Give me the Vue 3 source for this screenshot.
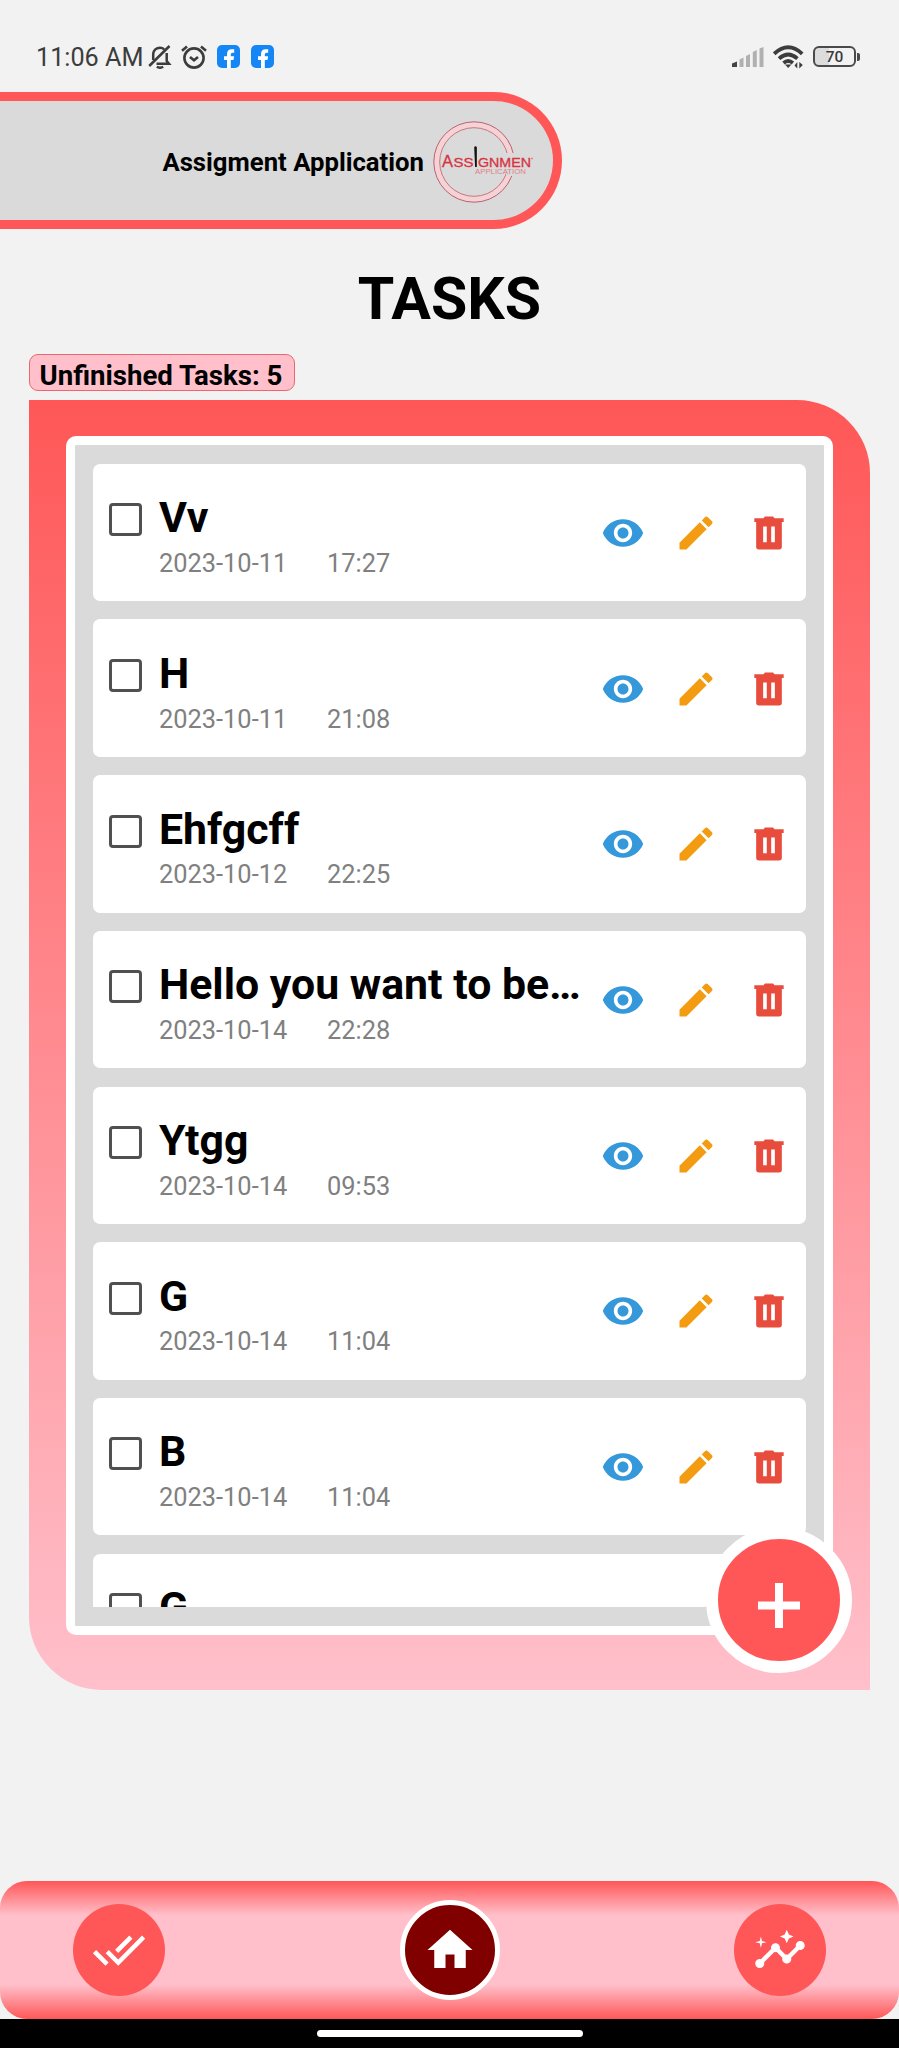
<script setup>
const tasks = [
  { title: 'Vv', date: '2023-10-11', time: '17:27' },
  { title: 'H', date: '2023-10-11', time: '21:08' },
  { title: 'Ehfgcff', date: '2023-10-12', time: '22:25' },
  { title: 'Hello you want to be…', date: '2023-10-14', time: '22:28' },
  { title: 'Ytgg', date: '2023-10-14', time: '09:53' },
  { title: 'G', date: '2023-10-14', time: '11:04' },
  { title: 'B', date: '2023-10-14', time: '11:04' },
  { title: 'G' },
]
</script>

<template>
  <div class="screen">
    <div class="status">
      <span class="clock">11:06 AM</span>
      <svg class="bell" viewBox="0 0 24 24" fill="none" stroke="#3c3c3c" stroke-width="2.500">
        <path d="M5.200 15.500V10a6.800 6.800 0 0 1 11-5.300M18.700 8.500v8l2.300 2.800H8.500" />
        <path d="M1.200 21.500 21.500 1.500" />
        <path d="M8.800 22.300q3.200 1.900 6.400 0" />
      </svg>
      <svg class="alarm" viewBox="0 0 26 24" fill="none" stroke="#3c3c3c" stroke-width="2.600">
        <circle cx="13" cy="13" r="9.600" />
        <path d="M1 5.800 6 1.400M25 5.800 20 1.400M9 12l4 3.300 4-3.300" />
      </svg>
      <svg v-for="n in 2" :key="n" class="fb" viewBox="0 0 23 23">
        <rect width="23" height="23" rx="5" fill="#1486f5" />
        <path d="M10 23v-8H7v-3.800h3V9q0-4.700 4.700-4.700h2.500v3.500h-1.700q-1.700 0-1.700 1.700v1.700h3.300l-.6 3.800h-2.700v8z" fill="#fff" />
      </svg>
      <span class="spacer"></span>
      <svg class="signal" viewBox="0 0 32 20">
        <path d="M0 20v-3.500l5-2V20z" fill="#444" />
        <path d="M7.500 20v-7.500l4-2V20zM14 20V9l4-2v13zM20.800 20V5l4-2v17zM27.500 20V1.500l4-1.500v20z" fill="#b0b0b0" />
      </svg>
      <svg class="wifi" viewBox="0 0 31 24" fill="none" stroke="#3c3c3c" stroke-width="3.800">
        <path d="M1.200 8.800q14-13 28 0M6 13.600q9.200-8.200 18.400 0M10.500 18q4.700-4 9.400 0" />
        <path d="M12 19.500h6.400L15.200 23z" fill="#3c3c3c" stroke="none" />
        <path d="M24.300 17v6.500l-2.800-3zM26.300 23.500V17l3.500 3z" fill="#3c3c3c" stroke="none" />
      </svg>
      <span class="battery"><span class="cell">70</span><span class="nub"></span></span>
    </div>

    <header class="brand">
      <span class="name">Assigment Application</span>
      <svg class="logo" viewBox="0 0 104 84">
        <circle cx="41" cy="42" r="37.300" fill="none" stroke="#f6d2d5" stroke-width="5.500" />
        <circle cx="41" cy="42" r="40.200" fill="none" stroke="#b0566a" stroke-width=".9" />
        <circle cx="41" cy="42" r="34.300" fill="none" stroke="#c36b78" stroke-width=".9" />
        <rect x="73" y="33" width="12" height="23" fill="#dadada" />
        <g fill="#d8323f" stroke="#d8323f" stroke-width=".3" font-family="'Liberation Sans', sans-serif">
          <text x="9" y="46.500" font-size="16" textLength="11" lengthAdjust="spacingAndGlyphs">A</text>
          <text x="20.500" y="46.500" font-size="12.500" textLength="20" lengthAdjust="spacingAndGlyphs">SS</text>
          <text x="45" y="46.500" font-size="12.500" textLength="53" lengthAdjust="spacingAndGlyphs">GNMEN</text>
          <text x="98.500" y="42" font-size="6">'</text>
          <text x="42" y="53.500" font-size="7" fill="#e07f87" stroke="none" textLength="51" lengthAdjust="spacingAndGlyphs">APPLICATION</text>
        </g>
        <path d="M41.200 27q1.300-1.500 2.600 0v20h-1.700z" fill="#111" />
      </svg>
    </header>

    <h1 class="title">TASKS</h1>
    <div class="count">Unfinished Tasks: 5</div>

    <main class="panel">
      <div class="frame">
        <div class="list">
          <article v-for="(task, i) in tasks" :key="i" class="card">
            <span class="check"></span>
            <div class="info">
              <div class="task">{{ task.title }}</div>
              <div v-if="task.date" class="meta"><span class="date">{{ task.date }}</span><span>{{ task.time }}</span></div>
            </div>
            <div class="actions">
              <svg viewBox="0 0 24 24" fill="#3498db"><path d="M12 4.500C7 4.500 2.730 7.610 1 12c1.730 4.390 6 7.500 11 7.500s9.270-3.110 11-7.500c-1.730-4.390-6-7.500-11-7.500zM12 17c-2.760 0-5-2.240-5-5s2.240-5 5-5 5 2.240 5 5-2.240 5-5 5zm0-8c-1.660 0-3 1.340-3 3s1.340 3 3 3 3-1.340 3-3-1.340-3-3-3z" /></svg>
              <svg viewBox="0 0 24 24" fill="#f39c12"><path d="M3 17.250V21h3.750L17.810 9.940l-3.750-3.750L3 17.250zM20.710 7.040c.39-.39.39-1.020 0-1.410l-2.340-2.340c-.39-.39-1.020-.39-1.410 0l-1.830 1.830 3.750 3.750 1.830-1.830z" /></svg>
              <svg viewBox="0 0 24 24" fill="#e74c3c"><path fill-rule="evenodd" d="M4 4h5l.8-1h4.400l.8 1h5v2h-1v13.500q0 1.500-1.500 1.500h-11q-1.500 0-1.500-1.500V6H4zM8.800 8.500V17h2V8.500zM13.200 8.500V17h2V8.500z" /></svg>
            </div>
          </article>
        </div>
      </div>
      <div class="fab">
        <svg viewBox="0 0 44 46"><path d="M22 0v45M1 22.500h42" stroke="#fff" stroke-width="8" /></svg>
      </div>
    </main>

    <nav class="tabs">
      <div class="tab">
        <svg viewBox="0 0 24 24"><path d="M18 7l-1.410-1.410-6.340 6.340 1.410 1.410L18 7zm4.240-1.410L11.660 16.170 7.480 12l-1.410 1.410L11.660 19l12-12-1.420-1.410zM.41 13.410L6 19l1.410-1.410L1.830 12 .41 13.410z" /></svg>
      </div>
      <div class="tab active">
        <svg viewBox="0 0 24 24"><path d="M10 20v-6h4v6h5v-8h3L12 3 2 12h3v8z" /></svg>
      </div>
      <div class="tab">
        <svg viewBox="0 0 24 24"><path d="M21 8c-1.450 0-2.260 1.440-1.930 2.510l-3.550 3.560c-.3-.09-.74-.09-1.040 0l-2.550-2.550C12.270 10.450 11.460 9 10 9c-1.450 0-2.270 1.440-1.930 2.520l-4.560 4.550C2.440 15.740 1 16.550 1 18c0 1.100.9 2 2 2 1.450 0 2.260-1.440 1.930-2.510l4.550-4.560c.3.090.74.090 1.040 0l2.550 2.550C12.730 16.550 13.540 18 15 18c1.450 0 2.270-1.440 1.930-2.520l3.560-3.550C21.560 12.260 23 11.450 23 10c0-1.100-.9-2-2-2zM15 9l.94-2.070L18 6l-2.060-.93L15 3l-.92 2.070L12 6l2.080.93zM3.500 11L4 9l2-.5L4 8l-.5-2L3 8l-2 .5L3 9z" /></svg>
      </div>
    </nav>
    <div class="gesture"><span class="handle"></span></div>
  </div>
</template>

<style>
body {
  background: #f2f2f2;
}
</style>

<style scoped>
.screen {
  box-sizing: border-box;
  width: 899px;
  height: 2048px;
  display: flex;
  flex-direction: column;
  overflow: hidden;
  background: #f2f2f2;
  font-family: Roboto, sans-serif;
  color: #000;
}
svg {
  display: block;
  flex: none;
}
.status {
  height: 92px;
  box-sizing: border-box;
  padding: 21px 39px 0 36px;
  display: flex;
  align-items: center;
  color: #3c3c3c;
}
.clock {
  width: 112px;
  padding-top: 2px;
  font-size: 25.200px;
  line-height: 30px;
  white-space: nowrap;
}
.bell { width: 24px; height: 25px; }
.alarm { width: 26px; height: 24px; margin: 0 10px 0 9px; }
.fb { width: 23px; height: 23px; margin-right: 11px; }
.spacer { flex: 1; }
.signal { width: 32px; height: 20px; }
.wifi { width: 31px; height: 24px; margin: 0 9px; }
.battery { display: flex; align-items: center; }
.cell {
  box-sizing: border-box;
  width: 43px;
  height: 21px;
  border: 2px solid #4a4a4a;
  border-radius: 6px;
  font-size: 15.500px;
  font-weight: 500;
  line-height: 18px;
  text-align: center;
  background: linear-gradient(90deg, #dcdcdc 35%, #f2f2f2 35%);
}
.nub { width: 3px; height: 8px; margin-left: 1px; background: #4a4a4a; border-radius: 0 2px 2px 0; }
.brand {
  box-sizing: border-box;
  width: 562px;
  height: 136.500px;
  border: 9px solid #ff5757;
  border-left: 0;
  border-radius: 0 69px 69px 0;
  background: #dadada;
  display: flex;
  align-items: center;
  justify-content: flex-end;
  padding: 4px 16px 0 0;
}
.name {
  font-size: 25.700px;
  font-weight: 700;
  line-height: 30px;
  white-space: nowrap;
}
.logo { width: 104px; height: 84px; margin-left: 9px; }
.title {
  margin: 35.500px 0 20px;
  font-size: 59px;
  font-weight: 700;
  line-height: 70px;
  text-align: center;
}
.count {
  box-sizing: border-box;
  width: 266px;
  height: 36.500px;
  margin-left: 29px;
  padding: 5px 0 0 9.500px;
  border: 1.500px solid #e8696d;
  border-radius: 9px;
  background: #ffc0cb;
  font-size: 27.600px;
  font-weight: 700;
  line-height: 32px;
  white-space: nowrap;
}
.panel {
  position: relative;
  box-sizing: border-box;
  width: 841px;
  height: 1290px;
  margin: 9.500px 0 0 29px;
  padding: 36.300px 37px 0;
  border-radius: 0 73px 0 73px;
  background: linear-gradient(#ff5757, #ffc0cb);
  flex: none;
}
.frame {
  box-sizing: border-box;
  height: 1198.700px;
  border: 9px solid #fff;
  border-radius: 10px;
  background: #dadada;
  padding: 18.500px 18px;
}
.list {
  height: 100%;
  overflow: hidden;
  display: flex;
  flex-direction: column;
  gap: 18.300px;
}
.card {
  box-sizing: border-box;
  flex: none;
  height: 137.400px;
  border-radius: 7px;
  background: #fff;
  display: flex;
  padding-left: 16px;
}
.check {
  box-sizing: border-box;
  flex: none;
  width: 33px;
  height: 33px;
  margin: 39.500px 17px 0 0;
  border: 3px solid #505050;
  border-radius: 4px;
}
.info {
  width: 432px;
  padding-top: 29.500px;
  white-space: nowrap;
}
.task { font-size: 42.800px; font-weight: 700; line-height: 48px; }
.meta {
  display: flex;
  margin-top: 6.600px;
  font-size: 25.400px;
  line-height: 30px;
  color: #808080;
}
.date { width: 168px; }
.actions {
  display: flex;
  align-items: center;
  gap: 29px;
  margin-left: 10px;
  padding-top: 1px;
}
.actions svg { width: 44px; height: 44px; }
.fab {
  position: absolute;
  left: 677px;
  top: 1127px;
  box-sizing: border-box;
  width: 146px;
  height: 146px;
  border: 12.500px solid #fff;
  border-radius: 50%;
  background: #ff5757;
  display: flex;
  justify-content: center;
  padding-top: 43.500px;
}
.fab svg { width: 44px; height: 46px; }
.tabs {
  box-sizing: border-box;
  flex: none;
  height: 138px;
  margin-top: auto;
  padding: 0 73px;
  border-radius: 27px;
  background: linear-gradient(#ff5757, #ffc0cb 25%, #ffc0cb 75%, #ff5757);
  display: flex;
  align-items: center;
  justify-content: space-between;
}
.tab {
  box-sizing: border-box;
  width: 92px;
  height: 92px;
  border-radius: 50%;
  background: #ff5757;
  display: flex;
  align-items: center;
  justify-content: center;
}
.tab svg { width: 54px; height: 54px; fill: #fff; }
.tab.active {
  width: 100px;
  height: 100px;
  border: 5px solid #fff;
  background: #800000;
}
.gesture {
  flex: none;
  height: 29px;
  background: #000;
  display: flex;
  align-items: center;
  justify-content: center;
}
.handle { width: 266px; height: 7px; border-radius: 4px; background: #fff; }
</style>
